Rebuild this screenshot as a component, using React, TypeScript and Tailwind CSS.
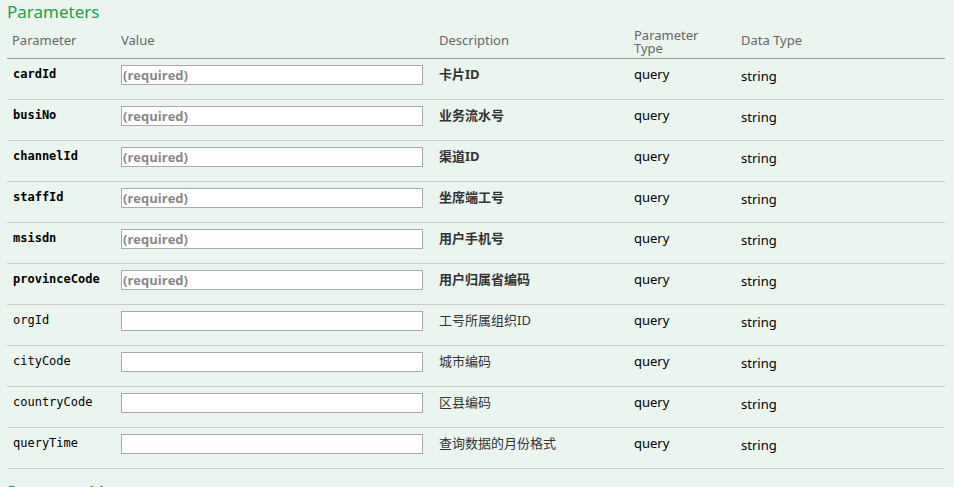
const params = [
  { name: "cardId", desc: "卡片ID", required: true },
  { name: "busiNo", desc: "业务流水号", required: true },
  { name: "channelId", desc: "渠道ID", required: true },
  { name: "staffId", desc: "坐席端工号", required: true },
  { name: "msisdn", desc: "用户手机号", required: true },
  { name: "provinceCode", desc: "用户归属省编码", required: true },
  { name: "orgId", desc: "工号所属组织ID", required: false },
  { name: "cityCode", desc: "城市编码", required: false },
  { name: "countryCode", desc: "区县编码", required: false },
  { name: "queryTime", desc: "查询数据的月份格式", required: false },
];

const sans = "font-['Noto_Sans','Noto_Sans_CJK_SC',sans-serif]";

export default function App() {
  return (
    <div className={`w-[954px] h-[487px] overflow-hidden bg-[#ebf5ef] ${sans}`}>
      <div className="pl-[7px] pr-[9px]">
        <h4 className="text-[17px] leading-[24px] text-[#10a54a]">Parameters</h4>

        <div className="flex items-center h-[35px] border-b border-[#999] text-[13px] text-[#666]">
          <div className="w-[108px] pl-[5px]">Parameter</div>
          <div className="w-[319px] pl-[6px]">Value</div>
          <div className="w-[195px] pl-[5px]">Description</div>
          <div className="w-[106px] pl-[5px] pt-[1px]">
            <div className="leading-[13px]">Parameter</div>
            <div className="leading-[13px]">Type</div>
          </div>
          <div className="pl-[6px]">Data Type</div>
        </div>

        {params.map((p) => (
          <div key={p.name} className="flex h-[41px] border-b border-[#ccc] text-[13px]">
            <div
              className={`w-[108px] pl-[6px] pt-[6px] font-['DejaVu_Sans_Mono',monospace] text-[12px] text-black ${
                p.required ? "font-bold" : ""
              }`}
            >
              {p.name}
            </div>
            <div className="w-[319px] pl-[6px] pt-[6px]">
              <input
                className="w-[302px] h-[20px] bg-white border border-[#aaa] px-[1px] font-['Open_Sans',sans-serif] text-[13px] font-bold text-[#888] placeholder:text-[#888] outline-none"
                placeholder={p.required ? "(required)" : ""}
              />
            </div>
            <div className={`w-[195px] pl-[5px] pt-[6px] text-[#333] ${p.required ? "font-bold" : ""}`}>
              {p.desc}
            </div>
            <div className="w-[106px] pl-[5px] pt-[6px] text-black">query</div>
            <div className="pl-[6px] pt-[8px] text-black">string</div>
          </div>
        ))}

        <h4 className="mt-[11px] text-[17px] leading-[24px] text-[#10a54a]">Response Messages</h4>
      </div>
    </div>
  );
}
